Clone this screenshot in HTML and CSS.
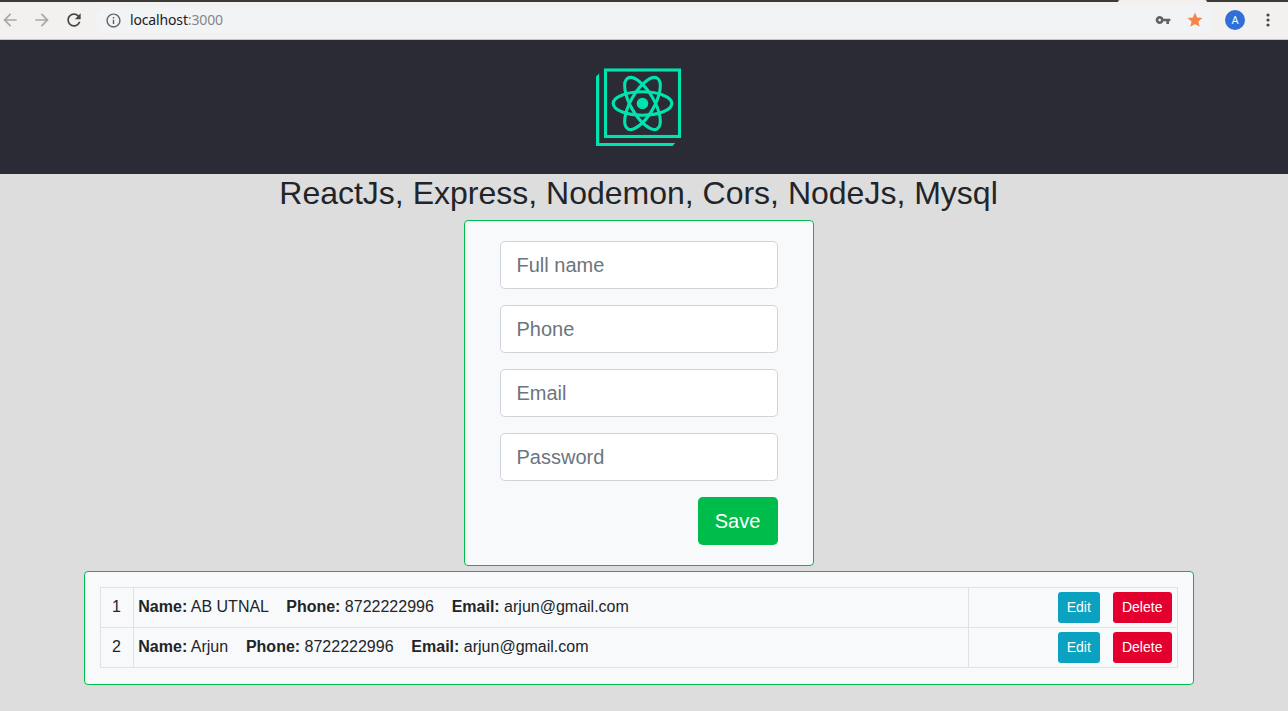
FILE: index.html
```html
<!DOCTYPE html>
<html lang="en">
<head>
<meta charset="utf-8">
<title>React App</title>
<link rel="stylesheet" href="styles.css">
</head>
<body>
<div class="browser-bar">
  <div class="tab-strip"><span class="active-tab"></span></div>
  <div class="toolbar">
    <svg class="nav-icon back" viewBox="0 0 24 24"><path d="M20 11H7.83l5.59-5.59L12 4l-8 8 8 8 1.41-1.41L7.83 13H20v-2z"/></svg>
    <svg class="nav-icon forward" viewBox="0 0 24 24"><path d="M12 4l-1.41 1.41L16.17 11H4v2h12.17l-5.58 5.59L12 20l8-8z"/></svg>
    <svg class="nav-icon reload" viewBox="0 0 24 24"><path d="M17.65 6.35C16.2 4.9 14.21 4 12 4c-4.42 0-7.99 3.58-7.99 8s3.57 8 7.99 8c3.73 0 6.84-2.55 7.73-6h-2.08c-.82 2.33-3.04 4-5.65 4-3.31 0-6-2.69-6-6s2.69-6 6-6c1.66 0 3.14.69 4.22 1.78L13 11h7V4l-2.35 2.35z"/></svg>
    <div class="omnibox">
      <svg class="info" viewBox="0 0 24 24"><path d="M11 17h2v-6h-2v6zm1-15C6.48 2 2 6.48 2 12s4.48 10 10 10 10-4.480 10-10S17.520 2 12 2zm0 18c-4.410 0-8-3.590-8-8s3.590-8 8-8 8 3.590 8 8-3.590 8-8 8zM11 9h2V7h-2v2z"/></svg>
      <span class="url">localhost<span class="port">:3000</span></span>
      <svg class="key" viewBox="0 0 24 24"><path d="M12.65 10C11.83 7.67 9.61 6 7 6c-3.31 0-6 2.69-6 6s2.69 6 6 6c2.61 0 4.83-1.67 5.65-4H17v4h4v-4h2v-4H12.65zM7 14c-1.1 0-2-.9-2-2s.9-2 2-2 2 .9 2 2-.9 2-2 2z"/></svg>
      <svg class="star" viewBox="0 0 24 24"><path d="M12 17.27L18.18 21l-1.64-7.03L22 9.24l-7.19-.61L12 2 9.19 8.63 2 9.24l5.46 4.73L5.82 21z"/></svg>
    </div>
    <span class="avatar">A</span>
    <svg class="more" viewBox="0 0 4 14"><circle cx="2" cy="2" r="1.6"/><circle cx="2" cy="7" r="1.6"/><circle cx="2" cy="12" r="1.6"/></svg>
  </div>
</div>
<header class="app-header">
  <svg class="logo" viewBox="596 68 86 79">
    <path class="solid" d="M596 76.500L599.200 73.500V143.100H675.400L672.500 146H596Z"/>
    <rect x="605.500" y="70" width="74" height="66.500"/>
    <ellipse cx="642.500" cy="103.500" rx="29.300" ry="11.700"/>
    <ellipse cx="642.500" cy="103.500" rx="29.300" ry="11.700" transform="rotate(60 642.500 103.500)"/>
    <ellipse cx="642.500" cy="103.500" rx="29.300" ry="11.700" transform="rotate(-60 642.500 103.500)"/>
    <circle class="solid" cx="642.500" cy="103.500" r="5.800"/>
  </svg>
</header>
<main class="content">
  <h2 class="title">ReactJs, Express, Nodemon, Cors, NodeJs, Mysql</h2>
  <form class="card user-form">
    <input class="field" type="text" placeholder="Full name">
    <input class="field" type="text" placeholder="Phone">
    <input class="field" type="text" placeholder="Email">
    <input class="field" type="password" placeholder="Password">
    <button class="btn save" type="button">Save</button>
  </form>
  <section class="card user-list">
    <table class="users">
      <colgroup><col class="col-id"><col class="col-info"><col class="col-actions"></colgroup>
      <tr>
        <td class="id">1</td>
        <td><b>Name:</b> AB UTNAL &nbsp;&nbsp; <b>Phone:</b> 8722222996 &nbsp;&nbsp; <b>Email:</b> arjun@gmail.com</td>
        <td><div class="actions"><button class="btn edit" type="button">Edit</button><button class="btn delete" type="button">Delete</button></div></td>
      </tr>
      <tr>
        <td class="id">2</td>
        <td><b>Name:</b> Arjun &nbsp;&nbsp; <b>Phone:</b> 8722222996 &nbsp;&nbsp; <b>Email:</b> arjun@gmail.com</td>
        <td><div class="actions"><button class="btn edit" type="button">Edit</button><button class="btn delete" type="button">Delete</button></div></td>
      </tr>
    </table>
  </section>
</main>
</body>
</html>
```
FILE: styles.css
```css
* { box-sizing: border-box; }
body {
  margin: 0;
  height: 711px;
  overflow: hidden;
  background: #ddd;
  color: #212529;
  font: 16px/24px "Liberation Sans", Arial, sans-serif;
}
svg { display: block; flex: none; }

.browser-bar { height: 40px; background: #f2f1ef; border-bottom: 1px solid #c6c6c6; }
.tab-strip { display: flex; justify-content: flex-end; height: 2px; padding-right: 81px; background: #3c3b37; }
.active-tab { width: 89px; height: 2px; background: #f2f1ef; border-radius: 2px 2px 0 0; }
.toolbar { display: flex; align-items: center; height: 36px; }
.nav-icon { width: 20px; height: 20px; }
.back { fill: #a9a8a7; }
.forward { margin-left: 12px; fill: #a9a8a7; }
.reload { margin-left: 12px; fill: #474747; }
.omnibox {
  display: flex;
  align-items: center;
  width: 1117px;
  height: 28px;
  margin-left: 12px;
  padding-left: 9px;
  background: #f1f3f4;
  border-radius: 14px;
}
.info { width: 17px; height: 17px; fill: #5f6368; }
.url {
  flex: 1;
  margin-left: 8px;
  font: 14px/20px "Noto Sans", sans-serif;
  letter-spacing: -0.15px;
  color: #202124;
}
.port { color: #84878b; }
.key { width: 16px; height: 16px; margin-right: 15px; fill: #5f6368; }
.star { width: 18px; height: 18px; margin-right: 9px; fill: #f58549; }
.avatar {
  width: 20px;
  height: 20px;
  margin-left: 12px;
  border-radius: 50%;
  background: #2f6fd6;
  color: #fff;
  font: 11px/21px Roboto, sans-serif;
  text-align: center;
}
.more { width: 4px; height: 14px; margin-left: 20.5px; fill: #474747; }

.app-header { height: 134px; padding: 28px 0 0 596px; background: #2b2b35; }
.logo { width: 86px; height: 79px; fill: none; stroke: #00e3ae; stroke-width: 3.1; }
.logo .solid { fill: #00e3ae; stroke: none; }

.content { width: 1110px; margin-left: 83.5px; }
.title { margin: 0 0 8px; font-size: 32px; font-weight: 400; line-height: 38.4px; text-align: center; }
.card { border: 1px solid #00bc4b; border-radius: 4px; background: #f8f9fb; }
.user-form {
  display: flex;
  flex-direction: column;
  gap: 16px;
  width: 350px;
  height: 346px;
  margin: 0 auto 5px;
  padding: 20px 35px;
}
.field {
  width: 278px;
  height: 48px;
  padding: 8px 16px;
  border: 1px solid #ced4da;
  border-radius: 4.8px;
  background: #fff;
  font: 20px/30px "Liberation Sans", Arial, sans-serif;
}
.field::placeholder { color: #6c757d; opacity: 1; }
.btn { margin: 0; border: 0; color: #fff; font-family: "Liberation Sans", Arial, sans-serif; }
.save { align-self: flex-end; width: 80px; height: 48px; padding: 0; border-radius: 4.8px; background: #00bc4b; font-size: 20px; }

.user-list { height: 114px; padding: 15px; }
.users { width: 1078px; border-collapse: collapse; table-layout: fixed; }
.col-id { width: 33px; }
.col-info { width: 835px; }
.users td { height: 40px; padding: 3px 4.8px 5px; border: 1px solid #dee2e6; }
.users .id { padding: 3px 0 5px; text-align: center; }
.users td:last-child { padding: 4px 4.8px; }
.actions { display: flex; justify-content: flex-end; gap: 13px; }
.edit, .delete { height: 31px; padding: 0 0 2px; border-radius: 3.2px; font-size: 14px; }
.edit { width: 42px; background: #0aa2c0; }
.delete { width: 59px; background: #e3002f; }
```
